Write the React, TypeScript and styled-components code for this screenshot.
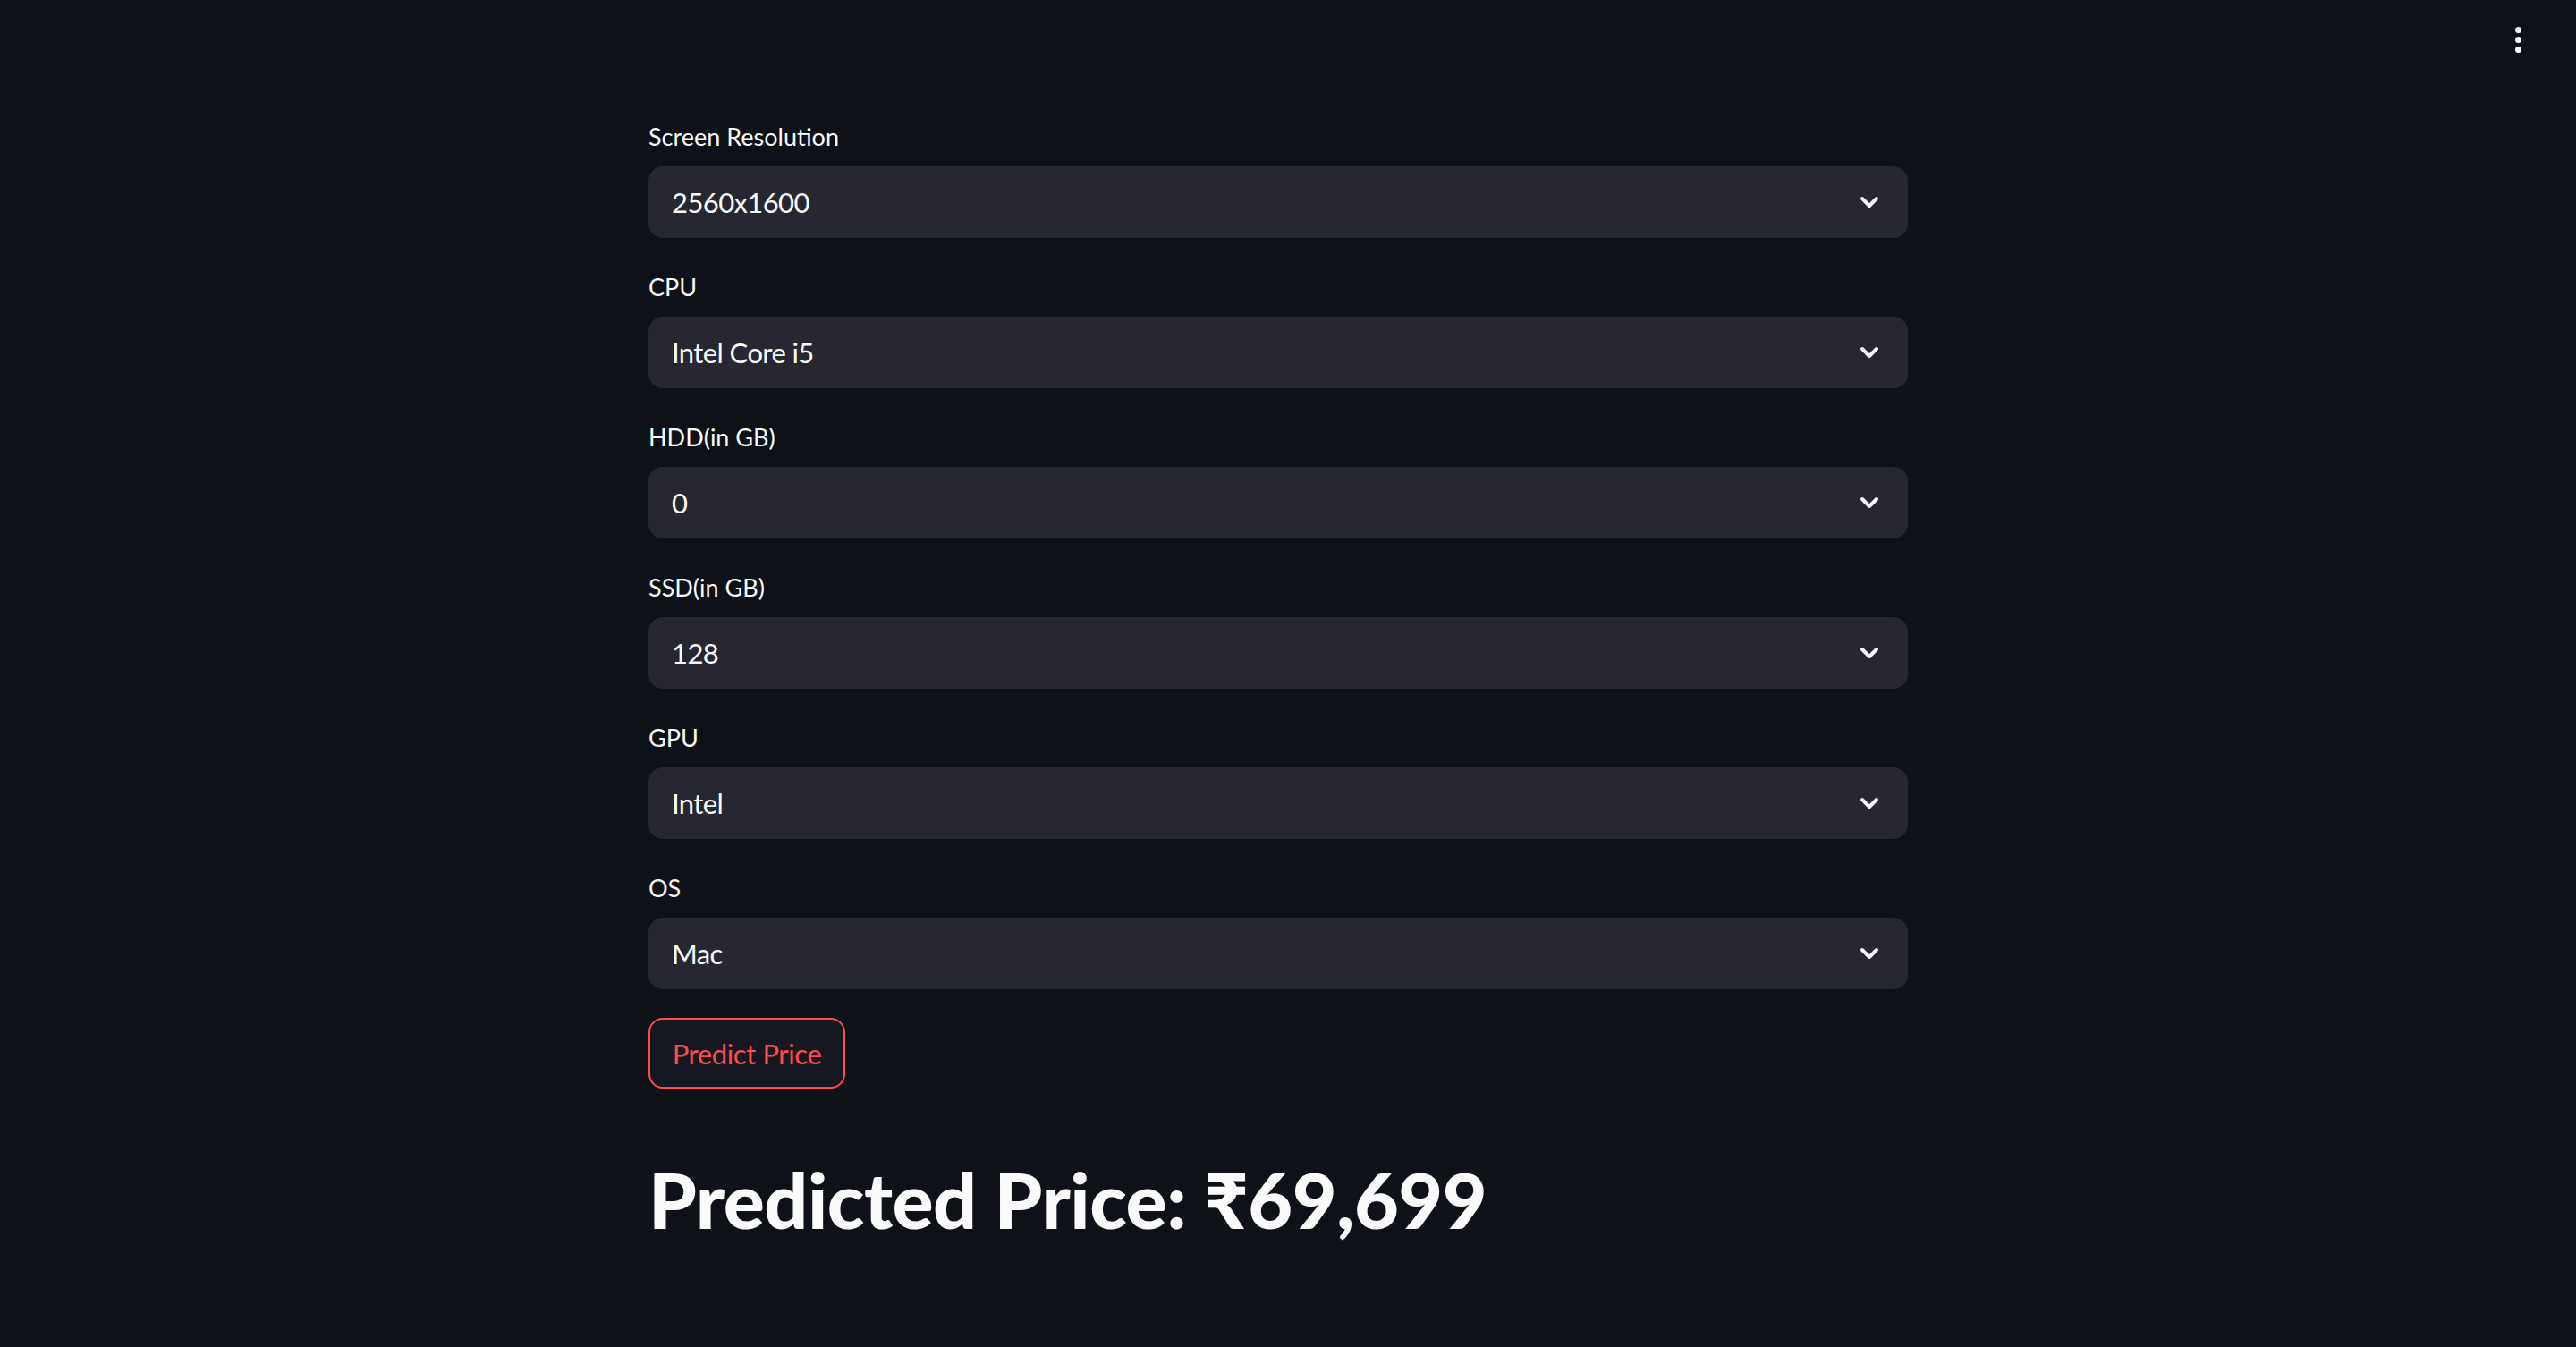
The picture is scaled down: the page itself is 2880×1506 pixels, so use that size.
import React from "react";
import styled, { createGlobalStyle } from "styled-components";

const Global = createGlobalStyle`
  html, body { margin: 0; padding: 0; background: #0e1117; }
  body { font-family: "Lato", "Noto Sans", sans-serif; color: #fafafa; }
  * { box-sizing: border-box; }
`;

const Page = styled.div`
  min-height: 1506px;
  background: #0e1117;
  display: flex;
  justify-content: center;
  padding: 130px 22px 0 0;
  position: relative;
`;

const Main = styled.main`
  width: 1408px;
  display: flex;
  flex-direction: column;
  gap: 32px;
`;

const Field = styled.div`
  display: flex;
  flex-direction: column;
`;

const Label = styled.label`
  font-size: 27px;
  line-height: 46px;
  height: 48px;
  margin-bottom: 8px;
  color: #fafafa;
`;

const SelectBox = styled.div`
  height: 80px;
  background: #262730;
  border-radius: 16px;
  display: flex;
  align-items: center;
  justify-content: space-between;
  padding: 0 32px 0 26px;
  font-size: 31px;
  letter-spacing: -0.6px;
  color: #fafafa;
`;

const Chevron = styled.svg`
  width: 22px;
  height: 14px;
  flex: none;
`;

const Button = styled.button`
  align-self: flex-start;
  width: 220px;
  height: 79px;
  padding: 0;
  border: 2px solid #ff4b4b;
  border-radius: 16px;
  background: #161821;
  color: #ff4b4b;
  font-family: inherit;
  font-size: 31px;
  letter-spacing: -0.4px;
  cursor: pointer;
`;

const Heading = styled.h1`
  margin: 0;
  padding: 40px 0 32px;
  font-size: 86px;
  font-weight: 900;
  line-height: 1.2;
  letter-spacing: -0.5px;
  color: #fafafa;
`;

const Menu = styled.div`
  position: absolute;
  top: 30px;
  right: 61px;
  display: flex;
  flex-direction: column;
  gap: 4px;
`;

const Dot = styled.span`
  width: 7px;
  height: 7px;
  border-radius: 50%;
  background: #fafafa;
`;

const fields: [string, string][] = [
  ["Screen Resolution", "2560x1600"],
  ["CPU", "Intel Core i5"],
  ["HDD(in GB)", "0"],
  ["SSD(in GB)", "128"],
  ["GPU", "Intel"],
  ["OS", "Mac"],
];

export default function App() {
  return (
    <>
      <Global />
      <Page>
        <Menu>
          <Dot />
          <Dot />
          <Dot />
        </Menu>
        <Main>
          {fields.map(([label, value]) => (
            <Field key={label}>
              <Label>{label}</Label>
              <SelectBox>
                <span>{value}</span>
                <Chevron viewBox="0 0 22 14">
                  <polyline
                    points="3,3 11,11 19,3"
                    fill="none"
                    stroke="#fafafa"
                    strokeWidth="4"
                    strokeLinecap="round"
                    strokeLinejoin="round"
                  />
                </Chevron>
              </SelectBox>
            </Field>
          ))}
          <Button>Predict Price</Button>
          <Heading>Predicted Price: ₹69,699</Heading>
        </Main>
      </Page>
    </>
  );
}
